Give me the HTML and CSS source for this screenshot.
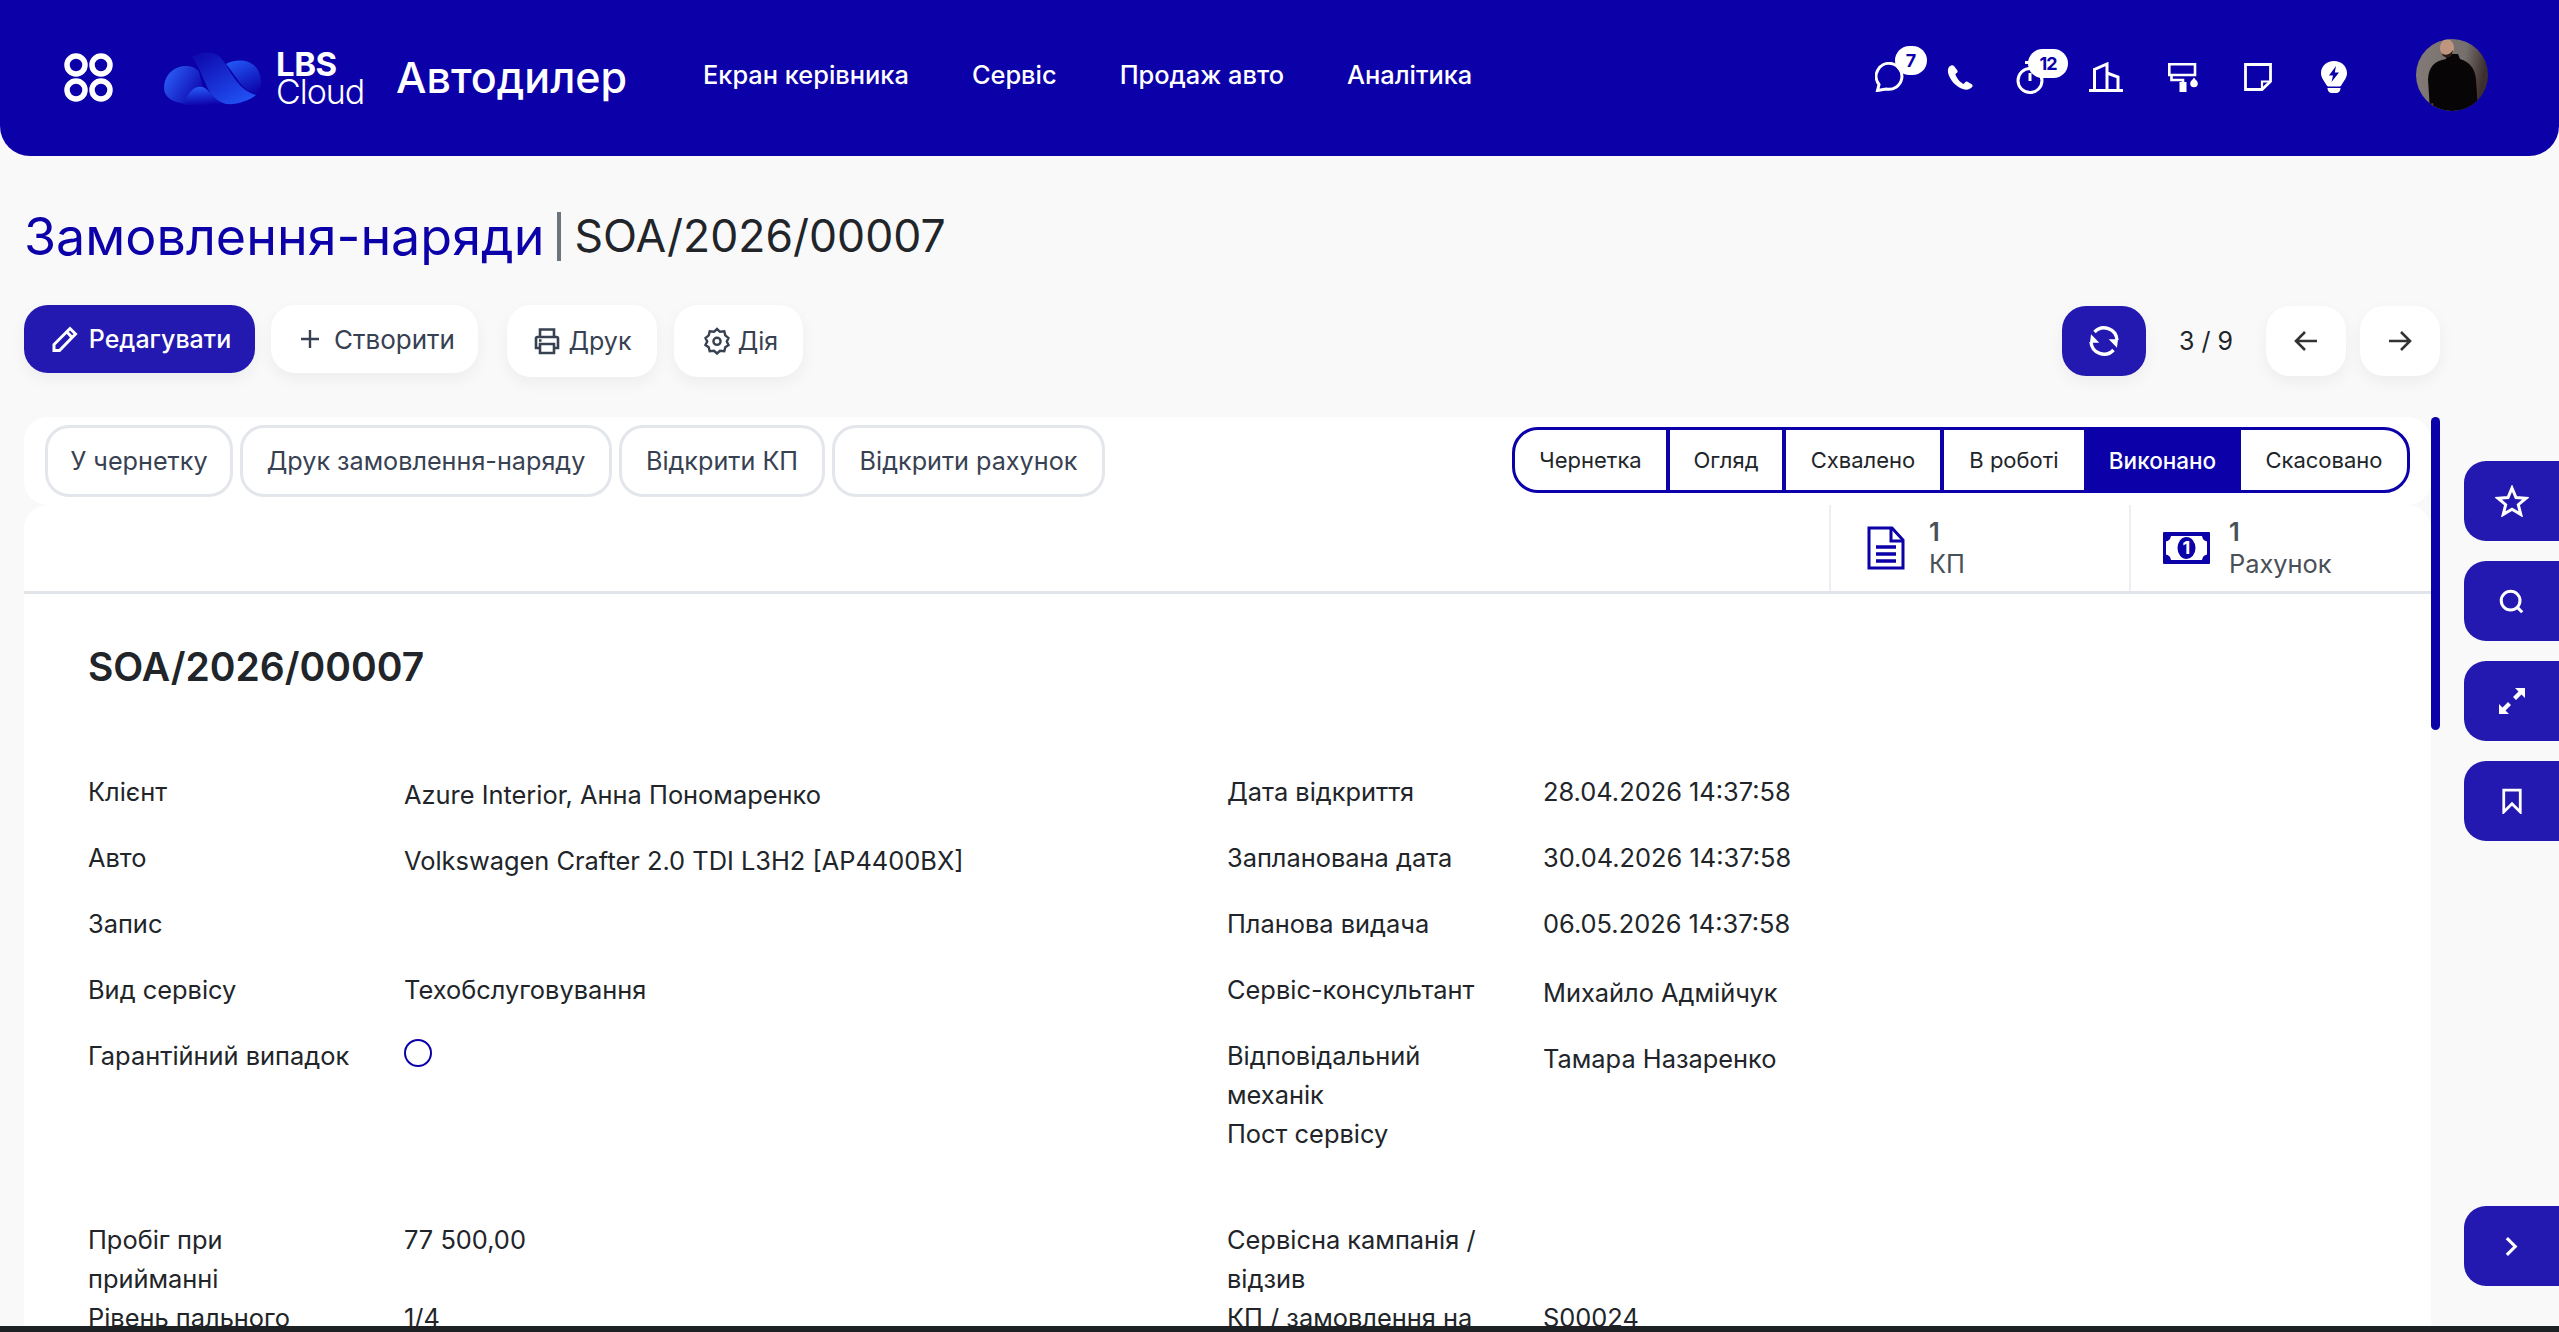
FILE: index.html
```html
<!DOCTYPE html>
<html lang="uk">
<head>
  <meta charset="UTF-8">
  <title>Замовлення-наряди</title>
  <link rel="stylesheet" href="styles.css">
</head>
<body>
  <header class="topbar">
    <svg class="apps-icon" viewBox="0 0 50 50" fill="none" stroke="#fff" stroke-width="5.5">
      <circle cx="12" cy="12" r="9"/><circle cx="37" cy="12" r="9"/>
      <circle cx="12" cy="37" r="9"/><circle cx="37" cy="37" r="9"/>
    </svg>
    <svg class="cloud-logo" viewBox="0 0 100 53">
      <defs>
        <linearGradient id="cl1" x1="0" y1="0.2" x2="1" y2="0.8"><stop offset="0" stop-color="#2b5ff8"/><stop offset="1" stop-color="#0c00a8"/></linearGradient>
        <linearGradient id="cl2" x1="0.1" y1="0" x2="0.8" y2="1"><stop offset="0" stop-color="#0e08ac"/><stop offset="1" stop-color="#2152f5"/></linearGradient>
        <linearGradient id="cl3" x1="0.2" y1="0" x2="0.7" y2="1"><stop offset="0" stop-color="#2257f5"/><stop offset="1" stop-color="#0c04aa"/></linearGradient>
        <linearGradient id="cl4" x1="0.4" y1="0" x2="0.6" y2="1"><stop offset="0" stop-color="#2659f6"/><stop offset="1" stop-color="#0c00a8"/></linearGradient>
      </defs>
      <path fill="url(#cl1)" d="M0 36C0 22 11 14 22 14C28 14 32 16 35 20L40 40L24 52C10 51 0 46 0 36Z"/>
      <path fill="url(#cl3)" d="M62 12C70 7 87 6 94 18C99 28 97 38 92 43C78 38 72 24 62 12Z"/>
      <path fill="url(#cl2)" d="M28 5C37 -1 50 -2 57 6C67 18 72 37 92 43C85 49 72 53 62 52C43 50 42 24 28 5Z"/>
      <path fill="url(#cl4)" d="M20 53C24 37 34 32 41 36C47 40 50 49 64 53Z"/>
    </svg>
    <div class="brand-text"><span class="brand-lbs">LBS</span><span class="brand-cloud">Cloud</span></div>
    <div class="app-name">Автодилер</div>
    <nav class="main-nav">
      <a href="#">Екран керівника</a>
      <a href="#">Сервіс</a>
      <a href="#">Продаж авто</a>
      <a href="#">Аналітика</a>
    </nav>
    <div class="systray">
      <div class="tray-item tray-chat">
        <svg viewBox="0 0 30 30" fill="none" stroke="#fff" stroke-width="3"><path d="M16 1.5A13 13 0 1 1 11 27L2.5 28.5L4 22.5A13 13 0 0 1 16 1.5Z"/></svg>
        <span class="tray-badge badge-chat">7</span>
      </div>
      <div class="tray-item tray-phone">
        <svg viewBox="0 0 27 25" fill="#fff"><path d="M5 0.5C2.5 1.5 1.5 4 2 7.500C3.500 14.500 10 22.500 18.500 24.500C21.500 25 25 24 26.500 21.500C26.800 20.500 26.500 19.800 25.700 19.300L21.500 16.800C20.600 16.300 19.800 16.500 19.200 17.200L17.600 19C14 17.500 10.500 13 9.300 9L11 7.700C11.700 7 11.800 6.300 11.400 5.500L8 1C7.200 0.200 6.100 0 5 0.500Z"/></svg>
      </div>
      <div class="tray-item tray-timer">
        <svg viewBox="0 0 28 33" fill="none" stroke="#fff" stroke-width="3"><circle cx="14" cy="19.500" r="12"/><path d="M9 1.500H19M14 12V20"/></svg>
        <span class="tray-badge badge-timer">12</span>
      </div>
      <div class="tray-item tray-building">
        <svg viewBox="0 0 34 30" fill="none" stroke="#fff" stroke-width="3"><path d="M0 28.500H34M5.500 28V7.500L18 2V28M18 11L29 15V28"/></svg>
      </div>
      <div class="tray-item tray-roller">
        <svg viewBox="0 0 30 29" fill="#fff"><path fill="none" stroke="#fff" stroke-width="2.600" d="M1.300 1.300H27V12H1.300ZM3.500 12.500V17H15V20"/><rect x="11.500" y="19" width="7" height="10"/><path d="M26 14.500C27.500 17 29.800 18 29.800 20.500A3.800 3.800 0 0 1 22.200 20.500C22.200 18 24.500 17 26 14.500Z"/></svg>
      </div>
      <div class="tray-item tray-note">
        <svg viewBox="0 0 28 28" fill="none" stroke="#fff" stroke-width="2.800"><path d="M1.500 1.500H26.500V18.500L18 26.500H1.500Z"/><path stroke-width="2.200" d="M18 26V18.500H26"/></svg>
      </div>
      <div class="tray-item tray-bulb">
        <svg viewBox="0 0 26 32"><path fill="#fff" d="M13 0C5.500 0 0 5.500 0 12C0 17 3 19.500 5.500 24C6 25.200 7 25.500 8 25.500H18C19 25.500 20 25.200 20.500 24C23 19.500 26 17 26 12C26 5.500 20.500 0 13 0Z"/><path fill="#0c00a8" d="M15 5L8 14.500H12L10.500 21L18 11.500H13.800Z"/><path fill="#fff" d="M6.500 27H19.500C19.500 30 17.500 32 15 32H11C8.500 32 6.500 30 6.500 27Z"/></svg>
      </div>
    </div>
    <svg class="avatar" viewBox="0 0 72 72">
      <defs>
        <clipPath id="avatarClip"><circle cx="36" cy="36" r="36"/></clipPath>
        <linearGradient id="avatarBg" x1="0" y1="0" x2="1" y2="0.2"><stop offset="0" stop-color="#837b77"/><stop offset="0.7" stop-color="#75706d"/><stop offset="1" stop-color="#3d2f2d"/></linearGradient>
      </defs>
      <g clip-path="url(#avatarClip)">
        <rect width="72" height="72" fill="url(#avatarBg)"/>
        <path fill="#070506" d="M14 72L12 40C13 28 18 22 30 20L31 15H42L44 20C54 23 59 30 60 40L62 72Z"/>
        <ellipse cx="31" cy="9" rx="7" ry="9" fill="#c09580"/>
        <path fill="#2a1a15" d="M25 13C27 17 33 17 37 11L36 16L31 19L27 17Z"/>
        <path fill="#6e3c2c" d="M12 66L14 72H18L17 64Z"/>
      </g>
    </svg>
  </header>

  <main class="page">
    <h1 class="page-title"><span class="crumb">Замовлення-наряди</span><span class="crumb-sep"></span><span class="crumb-current">SOA/2026/00007</span></h1>

    <div class="toolbar">
      <button class="tool-btn tool-primary btn-edit">
        <svg class="btn-icon" viewBox="0 0 26 26" fill="none" stroke="#fff" stroke-width="3"><path d="M2 24.500V18.500L18 2.500L23.500 8L7.500 24.500Z"/><path d="M15 6L20 11.500"/></svg>
        Редагувати
      </button>
      <button class="tool-btn btn-create">
        <svg class="btn-icon" viewBox="0 0 20 20" fill="none" stroke="#374151" stroke-width="2.400"><path d="M10 1V19M1 10H19"/></svg>
        Створити
      </button>
      <button class="tool-btn tool-tall btn-print">
        <svg class="btn-icon" viewBox="0 0 28 28" fill="none" stroke="#374151" stroke-width="2.600"><path d="M7 10V2.500H21V10M7 21H3V11.500C3 10.500 3.800 10 4.500 10H23.500C24.200 10 25 10.500 25 11.500V21H21"/><path d="M7 17H21V26H7Z"/><path d="M6 13.500H8.500"/></svg>
        Друк
      </button>
      <button class="tool-btn tool-tall btn-action">
        <svg class="btn-icon" viewBox="0 0 26 28" fill="none" stroke="#374151" stroke-width="2.400"><path d="M13 2L16 4.800L20.300 4.400L21.300 8.400L24.500 11L22.800 14.500L24.500 18L21.300 20.300L20.300 24.200L16 23.800L13 26.500L10 23.800L5.700 24.200L4.700 20.300L1.500 18L3.200 14.500L1.500 11L4.700 8.400L5.700 4.400L10 4.800Z"/><circle cx="13" cy="14.300" r="3.600"/></svg>
        Дія
      </button>
      <div class="pager">
        <button class="pager-btn pager-sync">
          <svg viewBox="0 0 32 32" fill="#fff" class="sync-icon"><path fill="none" stroke="#fff" stroke-width="3.400" d="M6.500 7A13 13 0 0 1 29 15M25.500 25A13 13 0 0 1 3 17"/><path d="M3 9.300L11.300 17.700H2Z"/><path d="M29 22.700L20.700 14.300H30Z"/></svg>
        </button>
        <span class="pager-count">3 / 9</span>
        <button class="pager-btn pager-nav">
          <svg viewBox="0 0 24 22" fill="none" stroke="#333" stroke-width="2.600"><path d="M23 11H2M11 2L2 11L11 20"/></svg>
        </button>
        <button class="pager-btn pager-nav">
          <svg viewBox="0 0 24 22" fill="none" stroke="#333" stroke-width="2.600"><path d="M1 11H22M13 2L22 11L13 20"/></svg>
        </button>
      </div>
    </div>

    <div class="workspace">
      <div class="form-view">
        <div class="status-row">
          <div class="action-btns">
            <button class="action-btn act-draft">У чернетку</button>
            <button class="action-btn act-print">Друк замовлення-наряду</button>
            <button class="action-btn act-quote">Відкрити КП</button>
            <button class="action-btn act-invoice">Відкрити рахунок</button>
          </div>
          <div class="status-bar">
            <span class="status-step step-draft">Чернетка</span>
            <span class="status-step step-review">Огляд</span>
            <span class="status-step step-approved">Схвалено</span>
            <span class="status-step step-work">В роботі</span>
            <span class="status-step step-done">Виконано</span>
            <span class="status-step step-cancel">Скасовано</span>
          </div>
        </div>

        <div class="sheet">
          <div class="stat-row">
            <div class="stat-btn">
              <span class="stat-icon">
                <svg class="icon-doc" viewBox="0 0 38 44" fill="none" stroke="#0c00a8" stroke-width="3"><path d="M2 2H25L36 14V42H2Z"/><path d="M24 2V15H36"/><path stroke-width="3.500" d="M9 21H29M9 28H29M9 35H29"/></svg>
              </span>
              <span class="stat-text"><b>1</b>КП</span>
            </div>
            <div class="stat-btn">
              <span class="stat-icon">
                <svg class="icon-money" viewBox="0 0 47 32"><rect width="47" height="32" rx="1" fill="#0c00a8"/><path fill="#fff" d="M8 4H39C39.500 7 41 9 44 9.500V22.500C41 23 39.500 25 39 28H8C7.500 25 6 23 3 22.500V9.500C6 9 7.500 7 8 4Z"/><ellipse cx="23.500" cy="16" rx="9" ry="11" fill="#0c00a8"/><text class="money-one" x="23.500" y="22" text-anchor="middle">1</text></svg>
              </span>
              <span class="stat-text"><b>1</b>Рахунок</span>
            </div>
          </div>

          <div class="sheet-body">
            <h2 class="record-name">SOA/2026/00007</h2>

            <div class="field-group">
              <div class="field-col">
                <div class="field"><label>Клієнт</label><div class="value value-link">Azure Interior, Анна Пономаренко</div></div>
                <div class="field"><label>Авто</label><div class="value value-link">Volkswagen Crafter 2.0 TDI L3H2 [AP4400BX]</div></div>
                <div class="field"><label>Запис</label><div class="value"></div></div>
                <div class="field"><label>Вид сервісу</label><div class="value">Техобслуговування</div></div>
                <div class="field"><label>Гарантійний випадок</label><div class="value"><span class="radio-mark"></span></div></div>
              </div>
              <div class="field-col">
                <div class="field"><label>Дата відкриття</label><div class="value">28.04.2026 14:37:58</div></div>
                <div class="field"><label>Запланована дата</label><div class="value">30.04.2026 14:37:58</div></div>
                <div class="field"><label>Планова видача</label><div class="value">06.05.2026 14:37:58</div></div>
                <div class="field"><label>Сервіс-консультант</label><div class="value value-link">Михайло Адмійчук</div></div>
                <div class="field"><label>Відповідальний механік</label><div class="value value-link">Тамара Назаренко</div></div>
                <div class="field"><label>Пост сервісу</label><div class="value"></div></div>
              </div>
            </div>

            <div class="field-group">
              <div class="field-col">
                <div class="field"><label>Пробіг при прийманні</label><div class="value">77 500,00</div></div>
                <div class="field"><label>Рівень пального</label><div class="value">1/4</div></div>
              </div>
              <div class="field-col">
                <div class="field"><label>Сервісна кампанія / відзив</label><div class="value"></div></div>
                <div class="field"><label>КП / замовлення на</label><div class="value">S00024</div></div>
              </div>
            </div>
          </div>
        </div>
      </div>

      <div class="scroll-track"><div class="scroll-thumb"></div></div>

      <aside class="side-rail">
        <button class="rail-btn">
          <svg class="rail-star" viewBox="0 0 34 32" fill="none" stroke="#fff" stroke-width="3"><path d="M17 3L21 12.500L31 13.200L23.300 19.700L25.800 29.500L17 24.200L8.200 29.500L10.700 19.700L3 13.200L13 12.500Z"/></svg>
        </button>
        <button class="rail-btn">
          <svg class="rail-search" viewBox="0 0 28 28" fill="none" stroke="#fff" stroke-width="3.400"><circle cx="13" cy="13" r="10.500"/><path d="M20 20L26 26"/></svg>
        </button>
        <button class="rail-btn">
          <svg class="rail-expand" viewBox="0 0 28 28" fill="#fff"><path d="M17 1H27V11L23.500 7.500L18 13L15 10L20.500 4.500Z"/><path d="M11 27H1V17L4.500 20.500L10 15L13 18L7.500 23.500Z"/></svg>
        </button>
        <button class="rail-btn">
          <svg class="rail-bookmark" viewBox="0 0 24 28" fill="none" stroke="#fff" stroke-width="3"><path d="M3 2H21V26L12 17L3 26Z"/></svg>
        </button>
        <button class="rail-btn rail-collapse">
          <svg class="rail-chevron" viewBox="0 0 14 22" fill="none" stroke="#fff" stroke-width="3.400"><path d="M2 2L11 11L2 20"/></svg>
        </button>
      </aside>
    </div>
  </main>
  <div class="window-edge"></div>
</body>
</html>
```

FILE: styles.css
```css
* {
  box-sizing: border-box;
}
html, body {
  height: 100%;
}
body {
  margin: 0;
  background: #f9f9f9;
  color: #212529;
  font-family: "Inter", "Noto Sans", sans-serif;
  font-size: 25.4px;
  display: flex;
  flex-direction: column;
  overflow: hidden;
}
button {
  font-family: inherit;
  cursor: pointer;
  border: none;
}

/* top bar */
.topbar {
  flex: none;
  height: 156px;
  background: #0c00a8;
  border-radius: 0 0 30px 30px;
  display: flex;
  align-items: center;
  color: #fff;
  padding-left: 64px;
}
.apps-icon {
  width: 50px;
  height: 50px;
  margin-right: 50px;
}
.cloud-logo {
  width: 100px;
  height: 53px;
  margin-right: 12px;
}
.brand-text {
  display: flex;
  flex-direction: column;
  width: 120px;
}
.brand-lbs {
  font-weight: 700;
  font-size: 33px;
  line-height: 27px;
  letter-spacing: -0.5px;
}
.brand-cloud {
  font-weight: 300;
  font-size: 34px;
  line-height: 27px;
  letter-spacing: -1px;
}
.app-name {
  font-size: 43px;
  font-weight: 500;
  width: 307px;
  margin-top: -3px;
}
.main-nav {
  display: flex;
  gap: 63px;
  font-size: 25.4px;
  font-weight: 500;
  margin-top: -8px;
}
.main-nav a {
  color: #fff;
  text-decoration: none;
}
.systray {
  margin-left: auto;
  display: flex;
  align-items: center;
  margin-top: -2px;
  margin-right: 69px;
}
.tray-item {
  position: relative;
  display: flex;
}
.tray-item svg {
  display: block;
}
.tray-chat svg { width: 30px; height: 30px; }
.tray-phone { margin-left: 41px; }
.tray-phone svg { width: 27px; height: 25px; }
.tray-timer { margin-left: 43px; }
.tray-timer svg { width: 28px; height: 33px; }
.tray-building { margin-left: 45px; }
.tray-building svg { width: 34px; height: 30px; }
.tray-roller { margin-left: 45px; }
.tray-roller svg { width: 30px; height: 29px; }
.tray-note { margin-left: 46px; }
.tray-note svg { width: 28px; height: 28px; }
.tray-bulb { margin-left: 49px; }
.tray-bulb svg { width: 26px; height: 32px; }
.tray-badge {
  position: absolute;
  background: #fff;
  color: #0c00a8;
  font-size: 18px;
  font-weight: 700;
  height: 29px;
  line-height: 29px;
  border-radius: 15px;
  text-align: center;
}
.badge-chat {
  left: 20px;
  top: -16px;
  width: 32px;
}
.badge-timer {
  left: 12px;
  top: -12px;
  width: 40px;
  letter-spacing: -1px;
}
.avatar {
  width: 72px;
  height: 72px;
  margin-right: 71px;
  margin-top: -6px;
}

/* page */
.page {
  flex: 1;
  min-height: 0;
  display: flex;
  flex-direction: column;
  overflow: hidden;
  padding-left: 24px;
}
.page-title {
  flex: none;
  margin: 49px 0 1px;
  display: flex;
  align-items: center;
  height: 62px;
  font-weight: 400;
}
.crumb {
  color: #0c00a8;
  font-size: 52px;
}
.crumb-sep {
  width: 4px;
  height: 49px;
  background: #6c757d;
  margin: 0 13px;
}
.crumb-current {
  font-size: 44.500px;
  color: #212529;
}

/* buttons under the title */
.toolbar {
  flex: none;
  display: flex;
  align-items: flex-start;
  margin: 37px 119px 40px 0;
  height: 72px;
}
.tool-btn {
  height: 68px;
  background: #fff;
  color: #374151;
  font-size: 25px;
  border-radius: 24px;
  display: flex;
  align-items: center;
  justify-content: center;
  box-shadow: 0 6px 16px rgba(0,0,0,0.05);
}
.tool-tall {
  height: 72px;
}
.tool-primary {
  background: #2318b0;
  color: #fff;
  font-weight: 500;
}
.btn-icon {
  flex: none;
}
.btn-edit {
  width: 231px;
  gap: 11px;
  padding-left: 10px;
}
.btn-edit .btn-icon { width: 26px; height: 26px; }
.btn-create {
  width: 207px;
  margin-left: 16px;
  gap: 14px;
  padding-left: 12px;
  font-size: 26px;
}
.btn-create .btn-icon { width: 20px; height: 20px; }
.btn-print {
  width: 150px;
  margin-left: 29px;
  gap: 8px;
}
.btn-print .btn-icon { width: 28px; height: 28px; }
.btn-action {
  width: 129px;
  margin-left: 17px;
  gap: 8px;
  padding-left: 11px;
}
.btn-action .btn-icon { width: 26px; height: 28px; }
.pager {
  margin-left: auto;
  display: flex;
  align-items: center;
  margin-top: 1px;
}
.pager-btn {
  height: 70px;
  border-radius: 24px;
  display: flex;
  align-items: center;
  justify-content: center;
  background: #fff;
  box-shadow: 0 6px 16px rgba(0,0,0,0.05);
}
.pager-sync {
  width: 84px;
  background: #2318b0;
  padding: 0;
}
.sync-icon {
  width: 32px;
  height: 32px;
}
.pager-count {
  width: 120px;
  text-align: center;
  font-size: 25px;
}
.pager-nav {
  width: 80px;
}
.pager-nav + .pager-nav {
  margin-left: 14px;
}
.pager-nav svg {
  width: 24px;
  height: 22px;
}

/* form */
.workspace {
  flex: 1;
  min-height: 0;
  display: flex;
  align-items: stretch;
}
.form-view {
  width: 2407px;
  display: flex;
  flex-direction: column;
  overflow: hidden;
}
.status-row {
  flex: none;
  height: 88px;
  background: #fff;
  border-radius: 24px;
  display: flex;
  align-items: center;
  justify-content: space-between;
  padding: 0 21px;
}
.action-btns {
  display: flex;
  gap: 7px;
}
.action-btn {
  height: 72px;
  padding: 0;
  background: #fff;
  color: #374151;
  font-size: 25.200px;
  border: 3px solid #e3e6ea;
  border-radius: 24px;
}
.act-draft { width: 188px; }
.act-print { width: 372px; }
.act-quote { width: 206px; }
.act-invoice { width: 273px; }
.status-bar {
  width: 898px;
  height: 66px;
  margin-top: -2px;
  border: 3px solid #0c00a8;
  border-radius: 26px;
  display: flex;
  overflow: hidden;
  font-size: 22px;
}
.status-step {
  display: flex;
  align-items: center;
  justify-content: center;
  border-right: 4px solid #0c00a8;
}
.step-draft { width: 155px; }
.step-review { width: 116px; }
.step-approved { width: 158px; }
.step-work { width: 140px; border-right: none; }
.step-done {
  width: 157px;
  background: #0c00a8;
  color: #fff;
  font-weight: 500;
  font-size: 22.500px;
  border-right: none;
}
.step-cancel {
  flex: 1;
  border-right: none;
}
.sheet {
  flex: 1;
  min-height: 0;
  background: #fff;
  border-radius: 24px 24px 0 0;
  overflow: hidden;
}
.stat-row {
  height: 89px;
  display: flex;
  justify-content: flex-end;
  padding-right: 2px;
  border-bottom: 3px solid #e1e4e8;
}
.stat-btn {
  width: 300px;
  display: flex;
  align-items: center;
  border-left: 2px solid #eeeff1;
  padding-left: 31px;
  gap: 19px;
}
.stat-icon {
  width: 48px;
  display: flex;
  justify-content: center;
}
.icon-doc {
  width: 38px;
  height: 44px;
}
.icon-money {
  width: 47px;
  height: 32px;
}
.money-one {
  fill: #fff;
  font-size: 18px;
  font-weight: 700;
}
.stat-text {
  display: flex;
  flex-direction: column;
  color: #495057;
  font-size: 25.400px;
  line-height: 32px;
}
.stat-text b {
  font-weight: 600;
}
.sheet-body {
  padding: 48px 0 0 64px;
}
.record-name {
  margin: 0 0 80px;
  font-size: 39px;
  line-height: 50px;
  font-weight: 600;
  color: #212529;
}
.field-group {
  display: grid;
  grid-template-columns: 1139px 1fr;
  margin-bottom: 40px;
}
.field {
  display: flex;
  min-height: 66px;
  line-height: 39px;
}
.field label {
  width: 266px;
  margin-right: 50px;
  flex: none;
}
.value-link {
  padding-top: 3px;
}
.radio-mark {
  display: block;
  width: 28px;
  height: 28px;
  margin-top: 3px;
  border: 2px solid #0c00a8;
  border-radius: 50%;
}

/* right side */
.scroll-track {
  width: 9px;
  flex: none;
}
.scroll-thumb {
  height: 313px;
  background: #0c00a8;
  border-radius: 5px;
}
.side-rail {
  margin-left: 24px;
  flex: 1;
  display: flex;
  flex-direction: column;
  gap: 20px;
  padding: 44px 0 40px;
}
.rail-btn {
  height: 80px;
  background: #2318b0;
  border-radius: 22px 0 0 22px;
  display: flex;
  align-items: center;
  justify-content: center;
  padding: 0;
}
.rail-star { width: 34px; height: 32px; }
.rail-search { width: 25px; height: 25px; }
.rail-expand { width: 28px; height: 28px; }
.rail-bookmark { width: 22px; height: 26px; }
.rail-chevron { width: 13px; height: 21px; }
.rail-collapse {
  margin-top: auto;
}
.window-edge {
  flex: none;
  height: 6px;
  background: #1e2124;
}
```
